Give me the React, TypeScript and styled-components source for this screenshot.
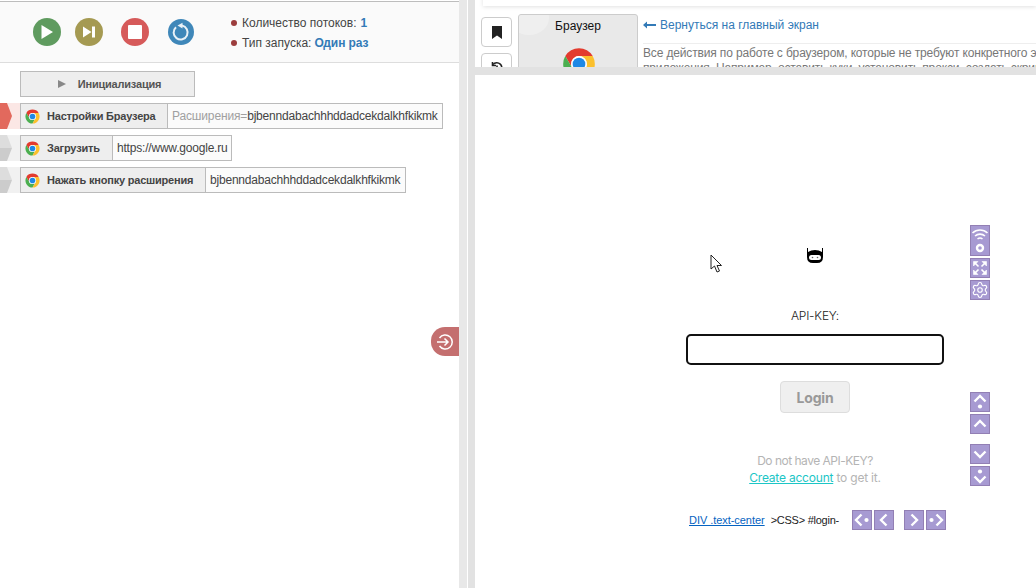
import React from "react";
import styled, { createGlobalStyle } from "styled-components";
import { Settings } from "lucide-react";

const Global = createGlobalStyle`
  html, body { margin: 0; padding: 0; width: 1036px; height: 588px; overflow: hidden; background: #fff; }
  body { font-family: "Liberation Sans", Arial, sans-serif; }
  * { box-sizing: border-box; }
`;

const Page = styled.div`display: flex; width: 1036px; height: 588px; position: relative; overflow: hidden;`;
const LeftPanel = styled.section`width: 459px; flex: none; display: flex; flex-direction: column; padding-top: 1px; position: relative;`;
const Toolbar = styled.div`
  height: 62px; flex: none; display: flex; align-items: center; background: #fafafa;
  border-top: 1px solid #bdbdbd; border-bottom: 1px solid #ddd; padding-left: 33px;
`;
const RoundButton = styled.div<{ $color: string; $gap: number; $size?: number }>`
  width: ${(p) => p.$size ?? 28}px; height: ${(p) => p.$size ?? 28}px; border-radius: 50%;
  background: ${(p) => p.$color}; margin-right: ${(p) => p.$gap}px; flex: none;
  display: flex; align-items: center; justify-content: center;
`;
const Stats = styled.ul`list-style: none; margin: 2px 0 0 38px; padding: 0; display: flex; flex-direction: column; gap: 6px;`;
const Stat = styled.li`
  display: flex; align-items: center; height: 14px; font-size: 12px; color: #444; white-space: nowrap;
  &::before { content: ""; width: 6px; height: 6px; border-radius: 50%; background: #9c3d3d; margin-right: 5px; margin-left: -1px; }
`;
const StatValue = styled.b<{ $ml: number }>`color: #337ab7; margin-left: ${(p) => p.$ml}px; font-weight: 700; letter-spacing: -0.1px;`;
const Rows = styled.div`display: flex; flex-direction: column; gap: 6px; padding-top: 8px;`;
const InitButton = styled.div`
  margin-left: 20px; width: 175px; height: 26px; background: #eee; border: 1px solid #bbb;
  display: flex; align-items: center; justify-content: center; gap: 12px; font-size: 11px; font-weight: 700; color: #555;
  padding-left: 4px; letter-spacing: -0.2px;
`;
const PlayMark = styled.span`width: 0; height: 0; border-left: 8px solid #888; border-top: 4.5px solid transparent; border-bottom: 4.5px solid transparent;`;
const Row = styled.div`display: flex; height: 26px;`;
const Handle = styled.div<{ $bg: string; $tip: string }>`
  width: 20px; flex: none; height: 26px; background: ${(p) => p.$bg}; position: relative;
  &::before {
    content: ""; position: absolute; left: 0; top: 0; width: 12px; height: 26px; background: ${(p) => p.$tip};
    clip-path: polygon(0 0, 7px 0, 12px 50%, 7px 100%, 0 100%);
  }
`;
const RowBody = styled.div`display: flex; height: 26px; border: 1px solid #bbb; background: #fbfbfb;`;
const RowLabel = styled.div<{ $w: number }>`
  width: ${(p) => p.$w}px; flex: none; display: flex; align-items: center; background: #eee; border-right: 1px solid #bbb;
  padding-left: 3px; gap: 6px; font-size: 11px; font-weight: 700; color: #444; white-space: nowrap; letter-spacing: -0.2px;
`;
const RowValue = styled.div<{ $pr: number }>`padding: 0 ${(p) => p.$pr}px 0 4px; display: flex; align-items: center; font-size: 12px; color: #444; white-space: nowrap; letter-spacing: -0.2px;`;
const Muted = styled.span`color: #a0a0a0; letter-spacing: -0.15px;`;
const Collapse = styled.div`
  position: absolute; right: 0; top: 327px; width: 28px; height: 29px; background: #c46f6f;
  border-radius: 14px 0 0 14px; display: flex; align-items: center; justify-content: center;
`;
const Gutter = styled.div`width: 16px; flex: none; display: flex; gap: 1px;`;
const GutterBar = styled.div<{ $c: string; $w: number }>`width: ${(p) => p.$w}px; background: ${(p) => p.$c}; flex: none;`;
const RightColumn = styled.section`flex: 1; display: flex; flex-direction: column; min-width: 0; position: relative;`;
const TopPane = styled.div`height: 67px; flex: none; overflow: hidden; background: #fff; position: relative; padding: 14px 0 0 6px; display: flex;`;
const TopStrip = styled.div`position: absolute; left: 8px; right: 0; top: -4px; height: 10px; background: #fff; box-shadow: 0 1px 4px rgba(0,0,0,.12);`;
const SideButtons = styled.div`display: flex; flex-direction: column; gap: 6px; padding-top: 3px; flex: none; width: 31px;`;
const SideButton = styled.div`width: 31px; height: 30px; flex: none; border: 1px solid #ccc; border-radius: 4px; background: #fff; display: flex; align-items: center; justify-content: center;`;
const AppCard = styled.div`
  width: 120px; height: 90px; flex: none; margin-left: 6px; background: #e9e9e9; border: 1px solid #ccc; border-radius: 3px 3px 0 0;
  display: flex; flex-direction: column; align-items: center; font-size: 12px; color: #111; padding-top: 4px; gap: 12px;
  position: relative; overflow: hidden;
  &::before {
    content: ""; position: absolute; left: -10px; top: -14px; width: 40px; height: 34px; border-radius: 50%;
    background: rgba(255,255,255,.3);
  }
`;
const AppTitle = styled.span`position: relative;`;
const AppLogo = styled.span`position: relative; left: 1px; display: flex;`;
const Intro = styled.div`margin-left: 5px; flex: 1; min-width: 0; white-space: nowrap; font-size: 12px; color: #777; overflow: hidden;`;
const BackLink = styled.div`color: #337ab7; display: flex; align-items: center; gap: 4px; height: 22px; margin-bottom: 7px;`;
const IntroRule = styled.div`height: 1px; background: #eee; margin-bottom: 2px;`;
const IntroLine = styled.div`line-height: 15px; letter-spacing: -0.15px;`;
const HBand = styled.div`height: 8px; flex: none; background: #e2e2e2;`;
const BottomPane = styled.div`flex: 1; position: relative; background: #fff; padding: 172px 0 0 211px;`;
const LoginColumn = styled.div`width: 258px; display: flex; flex-direction: column; align-items: center; font-family: Inter, sans-serif;`;
const Robot = styled.svg`display: block; width: 18px; height: 18px; flex: none;`;
const KeyLabel = styled.div`margin-top: 41px; height: 20px; font-size: 12px; font-weight: 300; letter-spacing: -0.2px; color: #222; line-height: 20px;`;
const KeyInput = styled.div`margin-top: 8px; width: 258px; height: 31px; border: 2px solid #111; border-radius: 5px; background: #fff;`;
const LoginButton = styled.div`
  margin-top: 16px; width: 70px; height: 32px; background: #efefef; border: 1px solid #ddd; border-radius: 4px;
  display: flex; align-items: center; justify-content: center; font-size: 14px; font-weight: 700; color: #999; letter-spacing: -0.2px;
`;
const Hint = styled.div`margin-top: 39px; text-align: center; font-size: 12px; line-height: 17px; color: #b4b4b4;`;
const HintLine = styled.div<{ $ls: number }>`letter-spacing: ${(p) => p.$ls}px;`;
const HintLink = styled.span`color: #1cc6c6; text-decoration: underline;`;
const SelectorRow = styled.div`margin: 24px 0 0 3px; align-self: flex-start; width: 260px; display: flex; align-items: center; height: 20px; font-family: "Liberation Sans", Arial, sans-serif; font-size: 11px; color: #222; white-space: nowrap;`;
const SelectorLink = styled.span`color: #0563c1; text-decoration: underline; margin-right: 6px; letter-spacing: -0.05px;`;
const SelectorText = styled.span`letter-spacing: -0.25px;`;
const SelectorGroup = styled.div<{ $ml: number }>`display: flex; gap: 2px; margin-left: ${(p) => p.$ml}px;`;
const ToolColumn = styled.div`position: absolute; left: 495px; top: 150px; display: flex; flex-direction: column; gap: 2px;`;
const ToolSpacer = styled.div<{ $h: number }>`height: ${(p) => p.$h}px;`;
const ToolButton = styled.div<{ $h?: number }>`
  width: 20px; height: ${(p) => p.$h ?? 20}px; background: #a79ad2; border: 1px solid #927fb4;
  display: flex; align-items: center; justify-content: center; flex: none;
`;
const Cursor = styled.svg`position: absolute; left: 235px; top: 179px; width: 14px; height: 20px;`;

const Chrome = ({ size }: { size: number }) => (
  <svg width={size} height={size} viewBox="0 0 48 48" style={{ flex: "none" }}>
    <path fill="#e33b2e" d="M6.68 14A20 20 0 0 1 41.32 14H24A10 10 0 0 0 15.34 29Z" />
    <path fill="#4caf50" d="M6.68 14L15.34 29A10 10 0 0 0 32.66 29L24 44A20 20 0 0 1 6.68 14Z" />
    <path fill="#fbc02d" d="M41.32 14H24A10 10 0 0 1 32.66 29L24 44A20 20 0 0 0 41.32 14Z" />
    <circle cx="24" cy="24" r="10" fill="#fff" />
    <circle cx="24" cy="24" r="8" fill="#1e88e5" />
  </svg>
);

const Chevron = ({ d, dot }: { d: string; dot?: [number, number] }) => (
  <svg width="18" height="18" viewBox="0 0 18 18" fill="none" stroke="#fff" strokeWidth="2.4">
    <path d={d} />
    {dot && <circle cx={dot[0]} cy={dot[1]} r="2.1" fill="#fff" stroke="none" />}
  </svg>
);
const Wifi = () => (
  <svg width="18" height="29" viewBox="0 0 18 29" fill="none" stroke="#fff" strokeWidth="1.6">
    <path d="M1.5 7A11 11 0 0 1 16.5 7" /><path d="M4 10A7.5 7.5 0 0 1 14 10" /><path d="M6.5 13A4 4 0 0 1 11.5 13" />
    <circle cx="9" cy="22" r="3" strokeWidth="2.4" />
  </svg>
);
const Expand = () => (
  <svg width="18" height="18" viewBox="0 0 18 18" fill="#fff" stroke="#fff" strokeWidth="1.6">
    <path d="M2.5 2.5H7L2.5 7Z" strokeWidth="0.6" /><path d="M15.5 2.5H11L15.5 7Z" strokeWidth="0.6" />
    <path d="M2.5 15.5H7L2.5 11Z" strokeWidth="0.6" /><path d="M15.5 15.5H11L15.5 11Z" strokeWidth="0.6" />
    <path d="M4 4L7.5 7.5M14 4L10.5 7.5M4 14L7.5 10.5M14 14L10.5 10.5" />
  </svg>
);

export default function App() {
  return (
    <Page>
      <Global />
      <LeftPanel>
        <Toolbar>
          <RoundButton $color="#5f9b5f" $gap={14}>
            <svg width="14" height="16" viewBox="0 0 14 16"><path fill="#fff" d="M1.5 1L13 8L1.5 15Z" /></svg>
          </RoundButton>
          <RoundButton $color="#a59a52" $gap={18}>
            <svg width="14" height="14" viewBox="0 0 14 14"><path fill="#fff" d="M1 1.5L9.5 7L1 12.5ZM10 1.5H13V12.5H10Z" /></svg>
          </RoundButton>
          <RoundButton $color="#d65a5a" $gap={19}>
            <svg width="14" height="14" viewBox="0 0 14 14"><rect width="14" height="14" rx="1" fill="#fff" /></svg>
          </RoundButton>
          <RoundButton $color="#3f87b9" $gap={0} $size={26}>
            <svg width="20" height="20" viewBox="0 0 20 20" fill="none">
              <path d="M11 3.6A7 7 0 1 1 5 5.2" stroke="#e9f1f7" strokeWidth="2" />
              <path d="M6.5 3.4L11.5 0.8V6.6Z" fill="#e9f1f7" />
            </svg>
          </RoundButton>
          <Stats>
            <Stat>Количество потоков:<StatValue $ml={4}>1</StatValue></Stat>
            <Stat>Тип запуска:<StatValue $ml={3}>Один раз</StatValue></Stat>
          </Stats>
        </Toolbar>
        <Rows>
          <InitButton><PlayMark />Инициализация</InitButton>
          <Row>
            <Handle $bg="#fbe7e5" $tip="#e2695d" />
            <RowBody>
              <RowLabel $w={147}><Chrome size={17} />Настройки Браузера</RowLabel>
              <RowValue $pr={4}><Muted>Расширения=</Muted>bjbenndabachhhddadcekdalkhfkikmk</RowValue>
            </RowBody>
          </Row>
          <Row>
            <Handle $bg="#f1f1f1" $tip="linear-gradient(#ddd 50%, #ccc 50%)" />
            <RowBody>
              <RowLabel $w={92}><Chrome size={17} />Загрузить</RowLabel>
              <RowValue $pr={3}>https://www.google.ru</RowValue>
            </RowBody>
          </Row>
          <Row>
            <Handle $bg="#f1f1f1" $tip="linear-gradient(#ddd 50%, #ccc 50%)" />
            <RowBody>
              <RowLabel $w={185}><Chrome size={17} />Нажать кнопку расширения</RowLabel>
              <RowValue $pr={5}>bjbenndabachhhddadcekdalkhfkikmk</RowValue>
            </RowBody>
          </Row>
        </Rows>
        <Collapse>
          <svg width="18" height="18" viewBox="0 0 18 18" fill="none" stroke="#fff" strokeWidth="1.5">
            <path d="M3.5 5A7 7 0 1 1 3.5 13" /><path d="M1 9H12M8.5 5.5L12 9L8.5 12.5" />
          </svg>
        </Collapse>
      </LeftPanel>
      <Gutter>
        <GutterBar $c="#e8e8e8" $w={8} />
        <GutterBar $c="#e2e2e2" $w={7} />
      </Gutter>
      <RightColumn>
        <TopPane>
          <TopStrip />
          <SideButtons>
            <SideButton>
              <svg width="10" height="13" viewBox="0 0 10 13"><path fill="#222" d="M0 0H10V13L5 9.5L0 13Z" /></svg>
            </SideButton>
            <SideButton>
              <svg width="14" height="14" viewBox="0 0 14 14" fill="none" stroke="#222" strokeWidth="1.6">
                <path d="M3 3.5A5 5 0 1 1 3 10" /><path d="M2.5 1V4.5H6" /><path d="M7 4.5V7.5H9" />
              </svg>
            </SideButton>
          </SideButtons>
          <AppCard>
            <AppTitle>Браузер</AppTitle>
            <AppLogo><Chrome size={38} /></AppLogo>
          </AppCard>
          <Intro>
            <BackLink>
              <svg width="13" height="8" viewBox="0 0 13 8"><path fill="#337ab7" d="M0 4L4 0.5V3H13V5H4V7.5Z" /></svg>
              Вернуться на главный экран
            </BackLink>
            <IntroRule />
            <IntroLine>Все действия по работе с браузером, которые не требуют конкретного элемента страницы или</IntroLine>
            <IntroLine>приложения. Например, оставить куки, установить прокси, создать скриншот страницы</IntroLine>
          </Intro>
        </TopPane>
        <HBand />
        <BottomPane>
          <LoginColumn>
            <Robot viewBox="0 0 18 18">
              <path fill="#000" d="M1 1H2V5Q5 3 9 3Q13 3 16 5V1H17V10Q17 16 11 16H7Q1 16 1 10Z" />
              <rect x="3" y="8" width="12" height="5" rx="2.5" fill="#fff" />
              <circle cx="6.5" cy="10.5" r="0.8" fill="#666" />
              <circle cx="11.5" cy="10.5" r="0.8" fill="#666" />
            </Robot>
            <KeyLabel>API-KEY:</KeyLabel>
            <KeyInput />
            <LoginButton>Login</LoginButton>
            <Hint>
              <HintLine $ls={-0.5}>Do not have API-KEY?</HintLine>
              <HintLine $ls={-0.2}><HintLink>Create account</HintLink> to get it.</HintLine>
            </Hint>
            <SelectorRow>
              <SelectorLink>DIV .text-center</SelectorLink>
              <SelectorText>&gt;CSS&gt; #login-</SelectorText>
              <SelectorGroup $ml={13}>
                <ToolButton><Chevron d="M8.5 3.5L3 9L8.5 14.5" dot={[13.5, 9]} /></ToolButton>
                <ToolButton><Chevron d="M11.5 3.5L6 9L11.5 14.5" /></ToolButton>
              </SelectorGroup>
              <SelectorGroup $ml={10}>
                <ToolButton><Chevron d="M6.5 3.5L12 9L6.5 14.5" /></ToolButton>
                <ToolButton><Chevron d="M9.5 3.5L15 9L9.5 14.5" dot={[4.5, 9]} /></ToolButton>
              </SelectorGroup>
            </SelectorRow>
          </LoginColumn>
          <ToolColumn>
            <ToolButton $h={31}><Wifi /></ToolButton>
            <ToolButton><Expand /></ToolButton>
            <ToolButton><Settings size={18} color="#fff" strokeWidth={1.5} /></ToolButton>
            <ToolSpacer $h={88} />
            <ToolButton><Chevron d="M3.5 8.5L9 3L14.5 8.5" dot={[9, 13.5]} /></ToolButton>
            <ToolButton><Chevron d="M3.5 11.5L9 6L14.5 11.5" /></ToolButton>
            <ToolSpacer $h={6} />
            <ToolButton><Chevron d="M3.5 6.5L9 12L14.5 6.5" /></ToolButton>
            <ToolButton><Chevron d="M3.5 9.5L9 15L14.5 9.5" dot={[9, 4.5]} /></ToolButton>
          </ToolColumn>
          <Cursor viewBox="0 0 14 20">
            <path d="M1 1V15L4.5 12L7 18L9.5 17L7 11.5H11.5Z" fill="#fff" stroke="#222" strokeWidth="1" />
          </Cursor>
        </BottomPane>
      </RightColumn>
    </Page>
  );
}
